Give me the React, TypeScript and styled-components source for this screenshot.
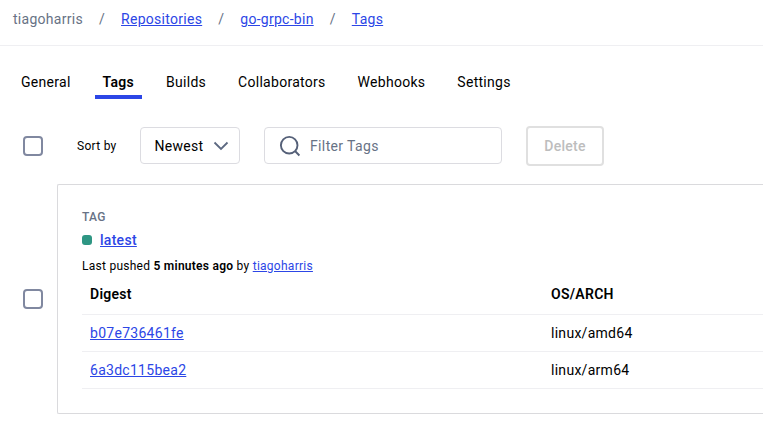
import React from "react";
import styled, { createGlobalStyle } from "styled-components";

const Global = createGlobalStyle`
  * { box-sizing: border-box; }
  body { margin: 0; background: #fff; overflow: hidden; }
`;
const Page = styled.div`
  width: 100%; height: 436px; overflow: hidden; background: #fff; color: #000;
  font: 14px/20px Roboto, sans-serif; letter-spacing: 0.28px; white-space: nowrap;
`;
const Link = styled.a`
  color: #2c46e6; text-decoration: underline;
`;
const Breadcrumbs = styled.nav`
  display: flex; align-items: center; gap: 16px; height: 46px; padding: 0 0 7px 13px;
  border-bottom: 1px solid #efeff2; color: #677285;
`;
const TabBar = styled.nav`
  display: flex; gap: 16px; height: 53px; padding: 20px 0 0 13px;
`;
const Tab = styled.a<{ $active?: boolean }>`
  height: 33px; padding: 6px 8px 0;
  font-weight: ${(p) => (p.$active ? 600 : 400)};
  border-bottom: 4px solid ${(p) => (p.$active ? "#2c46e6" : "transparent")};
`;
const Toolbar = styled.div`
  display: flex; align-items: center; height: 40px; margin-top: 27px; padding-left: 23px;
`;
const Checkbox = styled.span`
  flex: none; width: 20px; height: 20px; border: 2px solid #8088a0; border-radius: 4px;
`;
const SortLabel = styled.span`
  width: 63px; margin-left: 34px; font-size: 12px;
`;
const Select = styled.div`
  display: flex; align-items: center; justify-content: space-between;
  width: 100px; height: 37px; margin-bottom: 1px; padding: 1px 10px 0 13.5px;
  border: 1px solid #dcdce1; border-radius: 4px;
`;
const Search = styled.div`
  display: flex; align-items: center; gap: 8px; width: 238px; height: 37px; margin: 0 0 1px 24px;
  padding: 1px 0 0 14px; border: 1px solid #dcdce1; border-radius: 4px; color: #677285;
  letter-spacing: 0.36px;
`;
const DeleteButton = styled.div`
  width: 78px; height: 40px; margin-left: 24px; border: 2px solid #e0e0e0; border-radius: 4px;
  color: #bdbdbd; font-weight: 500; line-height: 36px; text-align: center;
`;
const TagRow = styled.div`
  display: flex; align-items: center; gap: 14px; height: 230px; margin-top: 18px; padding-left: 23px;
`;
const Card = styled.section`
  flex: 1; height: 230px; padding: 24px 0 0 24px; border: 1px solid #dadadd; border-right: 0;
  border-radius: 2px 0 0 2px;
`;
const Overline = styled.div`
  height: 18px; color: #677285; font-size: 12px; font-weight: 500; line-height: 16px;
`;
const TagName = styled.div`
  display: flex; align-items: center; gap: 8px; height: 26px; font-weight: 500;
`;
const Status = styled.span`
  width: 10px; height: 10px; border-radius: 3px; background: #2e9683;
`;
const Pushed = styled.div`
  height: 22px; font-size: 12px; line-height: 26px; letter-spacing: 0.26px;
  b { font-weight: 600; }
`;
const Row = styled.div<{ $head?: boolean }>`
  display: grid; grid-template-columns: 461px 1fr; align-items: center;
  height: ${(p) => (p.$head ? 40 : 37)}px; padding: 0 0 ${(p) => (p.$head ? 2 : 0)}px 8px;
  border-bottom: 1px solid #efeff2; font-weight: ${(p) => (p.$head ? 600 : 400)};
`;

const tabs = ["General", "Tags", "Builds", "Collaborators", "Webhooks", "Settings"];
const images = [["b07e736461fe", "linux/amd64"], ["6a3dc115bea2", "linux/arm64"]];

export default function App() {
  return (
    <Page>
      <Global />
      <Breadcrumbs>
        <span>tiagoharris</span><span>/</span><Link>Repositories</Link><span>/</span>
        <Link>go-grpc-bin</Link><span>/</span><Link>Tags</Link>
      </Breadcrumbs>
      <TabBar>{tabs.map((t) => <Tab key={t} $active={t === "Tags"}>{t}</Tab>)}</TabBar>
      <Toolbar>
        <Checkbox />
        <SortLabel>Sort by</SortLabel>
        <Select>Newest
          <svg width="16" height="10" viewBox="0 0 16 10" fill="none" stroke="#5d6981" strokeWidth="1.8"><path d="M1.5 1.5 8 8l6.5-6.5" /></svg>
        </Select>
        <Search>
          <svg width="23" height="23" viewBox="0 0 23 23" fill="none" stroke="#556078" strokeWidth="1.9"><circle cx="10.2" cy="10.2" r="8.3" /><path d="m16 16 4.4 4.5" /></svg>
          Filter Tags
        </Search>
        <DeleteButton>Delete</DeleteButton>
      </Toolbar>
      <TagRow>
        <Checkbox />
        <Card>
          <Overline>TAG</Overline>
          <TagName><Status /><Link>latest</Link></TagName>
          <Pushed>Last pushed <b>5 minutes ago</b> by <Link>tiagoharris</Link></Pushed>
          <Row $head><span>Digest</span><span>OS/ARCH</span></Row>
          {images.map(([d, os]) => <Row key={d}><span><Link>{d}</Link></span><span>{os}</span></Row>)}
        </Card>
      </TagRow>
    </Page>
  );
}
